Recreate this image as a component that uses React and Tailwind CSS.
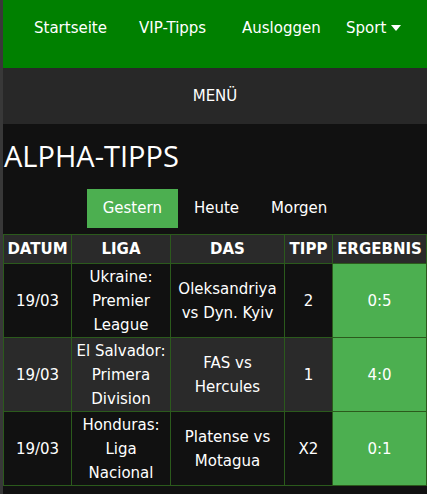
import React from 'react'

const ROWS = [
  { datum: '19/03', liga: ['Ukraine:', 'Premier', 'League'], das: ['Oleksandriya', 'vs Dyn. Kyiv'], tipp: '2', erg: '0:5' },
  { datum: '19/03', liga: ['El Salvador:', 'Primera', 'Division'], das: ['FAS vs', 'Hercules'], tipp: '1', erg: '4:0' },
  { datum: '19/03', liga: ['Honduras:', 'Liga', 'Nacional'], das: ['Platense vs', 'Motagua'], tipp: 'X2', erg: '0:1' },
]

export default function App() {
  return (
    <div className="flex min-h-[494px] bg-[#111111] text-white" style={{ fontFamily: '"DejaVu Sans", Verdana, sans-serif' }}>
      <div className="w-[3px] shrink-0 bg-[#383838]" />
      <div className="flex-1 min-w-0">
        {/* Navigation */}
        <nav className="h-[68px] bg-[#008000] pt-[14px]">
          <ul className="flex pl-[31px] text-[15px] leading-[28px] whitespace-nowrap">
            <li className="w-[105px]">Startseite</li>
            <li className="w-[103px]">VIP-Tipps</li>
            <li className="w-[104px]">Ausloggen</li>
            <li className="flex items-center">
              Sport
              <svg className="ml-[5px]" width="10" height="6" viewBox="0 0 10 6">
                <path d="M0 0h10L5 6z" fill="white" />
              </svg>
            </li>
          </ul>
        </nav>
        <div className="h-[56px] bg-[#282828] flex items-center justify-center text-[15px]">MENÜ</div>

        <h1 className="mt-[15px] ml-[1px] text-[29px] leading-[34px]" style={{ fontFamily: '"Open Sans", sans-serif' }}>
          ALPHA-TIPPS
        </h1>

        <div className="mt-[16px] flex justify-center text-[15px]">
          <div className="h-[39px] px-[16px] flex items-center bg-[#4caf50]">Gestern</div>
          <div className="h-[39px] px-[16px] flex items-center">Heute</div>
          <div className="h-[39px] px-[16px] flex items-center">Morgen</div>
        </div>

        <table className="mt-[6px] w-full table-fixed border-collapse text-[15px] text-center">
          <colgroup>
            <col className="w-[68px]" />
            <col className="w-[99px]" />
            <col className="w-[114px]" />
            <col className="w-[48px]" />
            <col className="w-[94px]" />
          </colgroup>
          <thead>
            <tr className="bg-[#2a2a2a] text-[15px] font-bold">
              {['DATUM', 'LIGA', 'DAS', 'TIPP', 'ERGEBNIS'].map(h => (
                <th key={h} className="border border-[#2b5a1c] h-[29px] p-0 leading-[24px] whitespace-nowrap">{h}</th>
              ))}
            </tr>
          </thead>
          <tbody>
            {ROWS.map((r, i) => (
              <tr key={i} className={i % 2 === 1 ? 'bg-[#2a2a2a]' : 'bg-[#111111]'}>
                <td className="border border-[#2b5a1c] h-[74px] p-0 leading-[24px]">{r.datum}</td>
                <td className="border border-[#2b5a1c] p-0 leading-[24px]">
                  {r.liga.map(l => <div key={l}>{l}</div>)}
                </td>
                <td className="border border-[#2b5a1c] p-0 leading-[24px] whitespace-nowrap">
                  {r.das.map(l => <div key={l}>{l}</div>)}
                </td>
                <td className="border border-[#2b5a1c] p-0 leading-[24px]">{r.tipp}</td>
                <td className="border border-[#2b5a1c] p-0 leading-[24px] bg-[#4caf50]">{r.erg}</td>
              </tr>
            ))}
          </tbody>
        </table>
      </div>
    </div>
  )
}
